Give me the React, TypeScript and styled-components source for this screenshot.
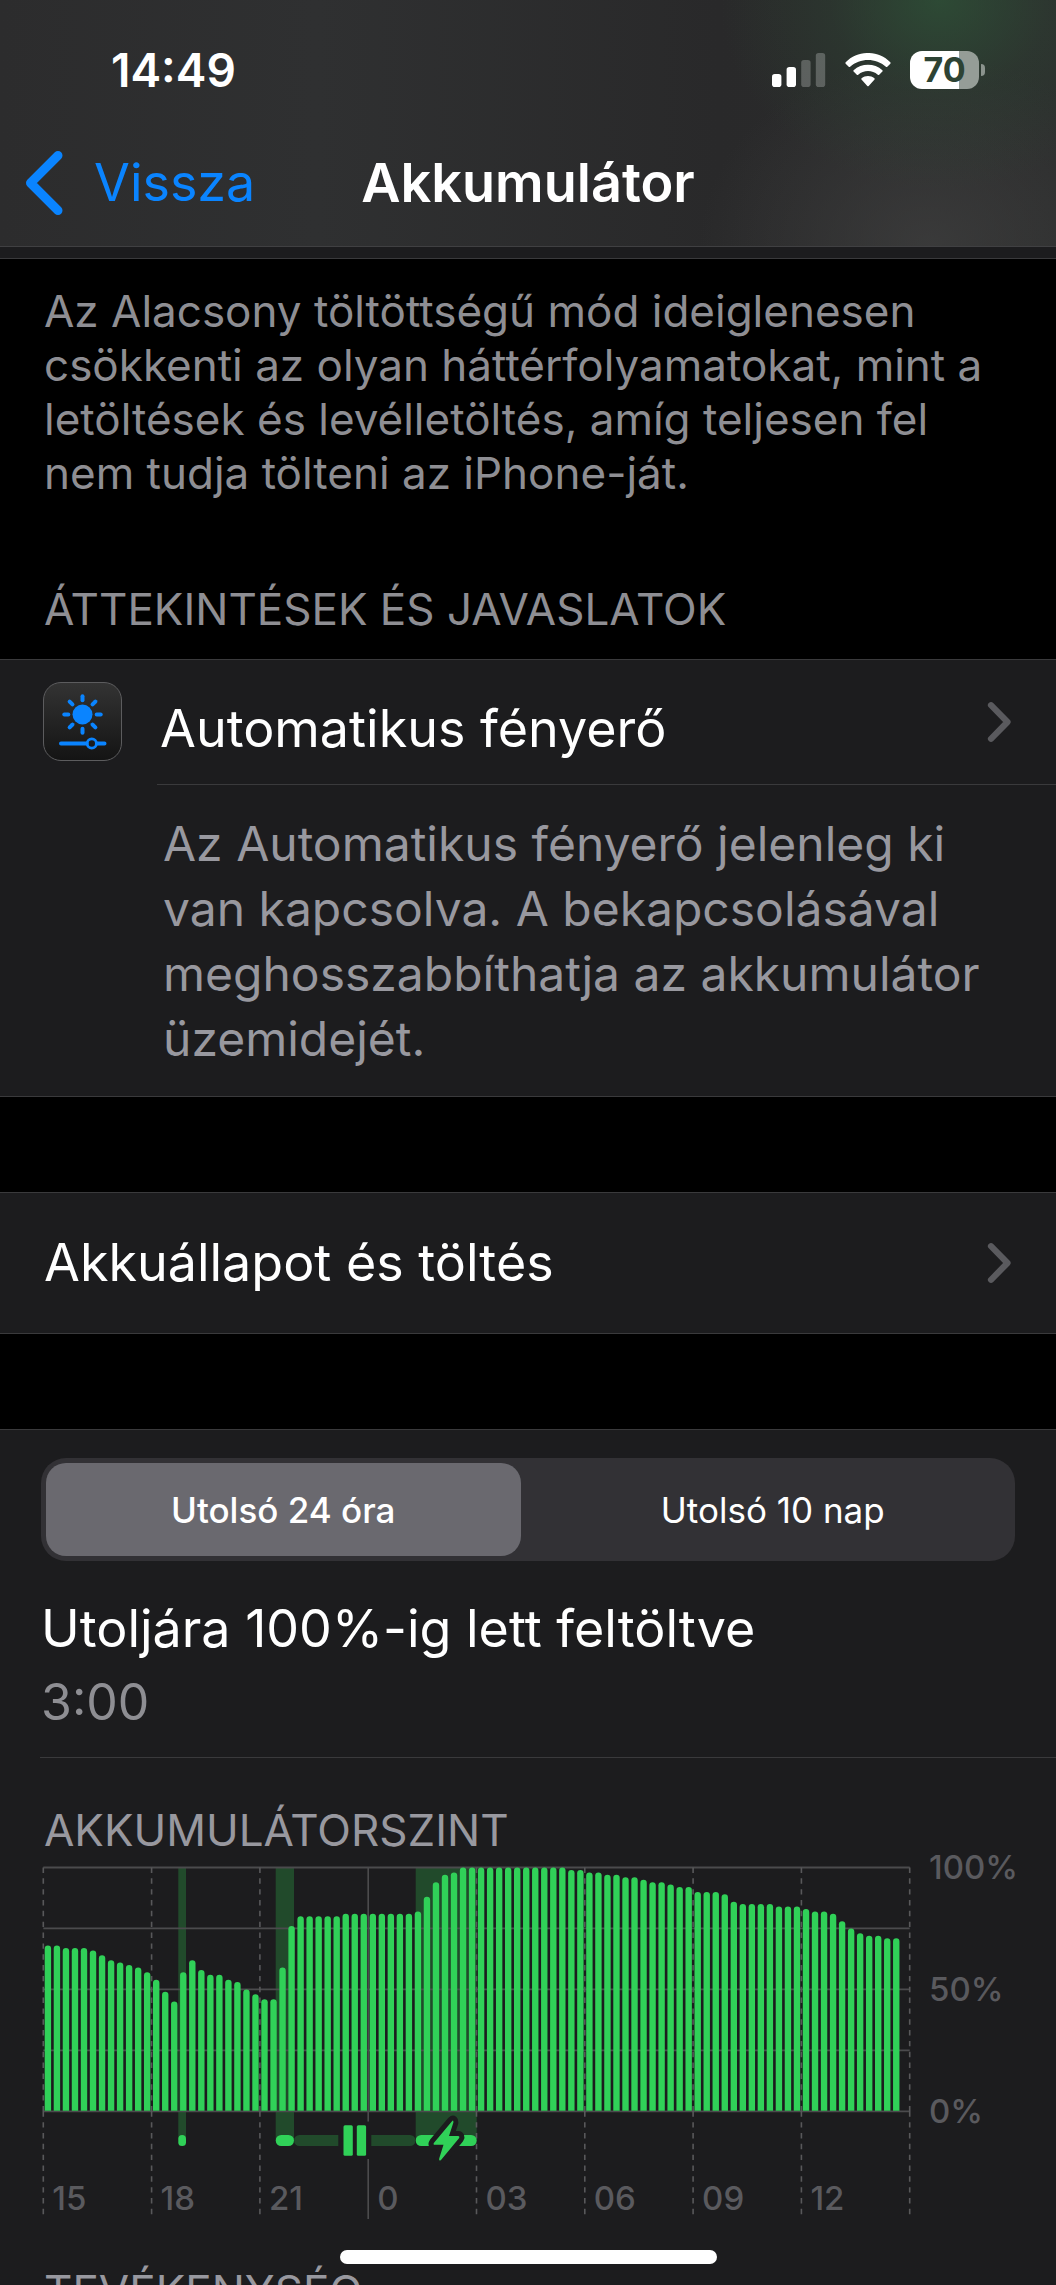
import React, { useState } from "react";
import styled, { createGlobalStyle } from "styled-components";

const color = {
  card: "#1c1c1e",
  line: "#3a3a3c",
  secondary: "#8e8e93",
  description: "#98989f",
  tertiary: "#5a5a5e",
  blue: "#0a84ff",
  green: "#30d158",
  greenDim: "#214a2b",
  grid: "#4b4b4d",
};

const GlobalStyle = createGlobalStyle`
  *, *::before, *::after { box-sizing: border-box; }
  html, body { margin: 0; background: #000; }
  body { font-family: Inter, "Liberation Sans", sans-serif; color: #fff; }
  h1, h2, p { margin: 0; font-weight: 400; }
`;

const Screen = styled.div`
  height: 100vh;
  overflow: hidden;
  background: #000;
`;

const Header = styled.header`
  padding-bottom: 20px;
  border-bottom: 1px solid #404042;
  background:
    radial-gradient(ellipse 220px 190px at 89% 0, rgba(46, 84, 56, 0.75), rgba(46, 76, 54, 0.3) 50%, transparent),
    radial-gradient(ellipse 230px 190px at 88% 100%, rgba(64, 64, 64, 0.7), transparent),
    linear-gradient(90deg, #2c2c2d, #2f3031 30%, #29292a 68%, #2c2d2d);
`;

const StatusBar = styled.div`
  display: flex;
  align-items: center;
  justify-content: space-between;
  height: 140px;
  padding: 0 71px 0 111px;
`;

const Time = styled.time`
  font-size: 46px;
  line-height: 54px;
  font-weight: 600;
`;

const StatusIcons = styled.div`
  display: flex;
  align-items: center;
  gap: 19px;
`;

const Battery = styled.div`
  display: flex;
  align-items: center;
  gap: 2px;
`;

const BatteryBody = styled.div<{ $level: number }>`
  width: 69px;
  height: 38px;
  border-radius: 12px;
  background: linear-gradient(90deg, #fff ${(p) => p.$level}%, #959d97 ${(p) => p.$level}%);
  color: #2d4334;
  font-size: 34px;
  line-height: 38px;
  font-weight: 700;
  text-align: center;
`;

const BatteryNub = styled.div`
  width: 4px;
  height: 12px;
  border-radius: 0 4px 4px 0;
  background: #8b938d;
`;

const NavBar = styled.nav`
  display: grid;
  grid-template-columns: 1fr auto 1fr;
  align-items: center;
  height: 86px;
  padding: 0 24px;
`;

const BackLink = styled.a`
  display: flex;
  align-items: center;
  gap: 29px;
  color: ${color.blue};
  font-size: 52px;
  line-height: 68px;
  text-decoration: none;
`;

const NavTitle = styled.h1`
  font-size: 54px;
  line-height: 68px;
  font-weight: 600;
`;

const GroupTail = styled.div`
  height: 12px;
  border-bottom: 1px solid ${color.line};
  background: ${color.card};
`;

const FootNote = styled.p`
  padding: 25px 44px 0;
  color: ${color.secondary};
  font-size: 44px;
  line-height: 54px;
`;

const SectionTitle = styled.h2<{ $top: number; $inCard?: boolean }>`
  padding: ${(p) => p.$top}px 44px 0;
  color: ${(p) => (p.$inCard ? color.description : color.secondary)};
  font-size: 44px;
  line-height: 54px;
  text-transform: uppercase;
`;

const Group = styled.section<{ $gap: number }>`
  margin-top: ${(p) => p.$gap}px;
  border-top: 1px solid ${color.line};
  border-bottom: 1px solid ${color.line};
  background: ${color.card};
`;

const RowLink = styled.a`
  display: flex;
  align-items: center;
  justify-content: space-between;
  height: 140px;
  padding: 0 42px 0 44px;
  color: #fff;
  font-size: 52px;
  line-height: 68px;
  text-decoration: none;
`;

const Suggestion = styled.div`
  display: grid;
  grid-template-columns: 79px 1fr;
  column-gap: 35px;
  padding-left: 43px;
`;

const AppIcon = styled.div`
  display: flex;
  margin-top: 22px;
  height: 79px;
  border: 1px solid #5c5c5e;
  border-radius: 18px;
  background: linear-gradient(#333, #141414);
`;

const SuggestionLink = styled.a`
  display: flex;
  align-items: flex-end;
  justify-content: space-between;
  height: 125px;
  padding: 20px 42px 21px 3px;
  border-bottom: 1px solid ${color.line};
  color: #fff;
  font-size: 52px;
  line-height: 68px;
  text-decoration: none;
`;

const SuggestionText = styled.p`
  grid-column: 2;
  padding: 26px 44px 25px 6px;
  color: ${color.description};
  font-size: 48px;
  line-height: 65px;
`;

const Chevron = styled.svg`
  flex: none;
  align-self: center;
`;

const Segmented = styled.div`
  display: grid;
  grid-template-columns: 1fr 1fr;
  gap: 15px;
  height: 103px;
  margin: 28px 41px 0;
  padding: 5px;
  border-radius: 25px;
  background: #323135;
`;

const Segment = styled.button<{ $active: boolean }>`
  border: 0;
  border-radius: 20px;
  background: ${(p) => (p.$active ? "#6a696f" : "transparent")};
  color: #fff;
  font-family: inherit;
  font-size: 35px;
  line-height: 42px;
  font-weight: ${(p) => (p.$active ? 500 : 400)};
`;

const LastCharge = styled.div`
  margin-left: 40px;
  padding: 34px 0 25px 1px;
  border-bottom: 1px solid ${color.line};
`;

const ChargeTitle = styled.p`
  font-size: 52px;
  line-height: 68px;
`;

const ChargeTime = styled.p`
  padding-top: 9px;
  color: ${color.secondary};
  font-size: 50px;
  line-height: 60px;
`;

const ChartSvg = styled.svg`
  display: block;
  width: 100%;
  height: auto;
  overflow: visible;
  font-size: 33px;
  font-weight: 500;
`;

const HomeIndicator = styled.div`
  position: fixed;
  bottom: 21px;
  left: 50%;
  width: 377px;
  height: 14px;
  margin-left: -188px;
  border-radius: 7px;
  background: #fff;
`;

const levels = [
  68, 68, 67, 67, 67, 66, 64, 62, 61, 60, 59, 57,
  54, 49, 45, 57, 62, 58, 56, 56, 54, 53, 50, 48,
  46, 46, 59, 76, 80, 80, 80, 80, 80, 81, 81, 81,
  81, 81, 81, 81, 81, 82, 88, 94, 97, 98, 100, 100,
  100, 100, 100, 100, 100, 100, 100, 100, 100, 100, 99, 99,
  98, 98, 97, 97, 96, 96, 95, 94, 94, 93, 92, 92,
  90, 90, 90, 89, 86, 85, 85, 85, 85, 84, 84, 84,
  83, 82, 82, 81, 78, 75, 73, 72, 72, 71, 71,
];

const hours = ["15", "18", "21", "0", "03", "06", "09", "12"];

const charging = [
  { x: 178.3, w: 7.7 },
  { x: 275.7, w: 18.3 },
  { x: 415.7, w: 61 },
];

const LEFT = 43.3;
const RIGHT = 909.7;
const TOP = 10.5;
const PLOT = 243.8;
const BOTTOM = TOP + PLOT;
const SLOT = (RIGHT - LEFT) / 96;
const BOLT = "M452 264.2 L434 285.8 Q432.6 287.8 435 287.8 L443.5 287.8 L439.2 301.5 Q438.6 304.6 441 303 L459 281.2 Q460.2 279.2 458 279 L449 279 L453.4 265.4 Q453.6 262.6 452 264.2 Z";

function barPath(level: number, index: number) {
  const x = LEFT + index * SLOT + 1.4;
  const w = 6.4;
  const y = BOTTOM - (PLOT * level) / 100;
  return `M${x} ${BOTTOM - 0.5}V${y + 3.2}a3.2 3.2 0 0 1 ${w} 0V${BOTTOM - 0.5}z`;
}

function BatteryChart() {
  return (
    <ChartSvg viewBox="0 0 1056 362" role="img" aria-label="Akkumulátorszint">
      {charging.map((c) => (
        <rect key={c.x} x={c.x} y={TOP} width={c.w} height={272} fill={color.greenDim} />
      ))}
      {[0, 1, 2, 3, 4].map((i) => (
        <line key={i} x1={LEFT} x2={RIGHT} y1={TOP + (PLOT * i) / 4} y2={TOP + (PLOT * i) / 4} stroke={color.grid} strokeWidth="1.8" />
      ))}
      {[0, 1, 2, 3, 4, 5, 6, 7, 8].map((i) => {
        const x = LEFT + i * SLOT * 12;
        return i === 3 ? (
          <path key={i} d={`M${x} ${TOP}V264.5M${x} 302V362`} stroke={color.grid} strokeWidth="1.6" />
        ) : (
          <path key={i} d={`M${x} ${TOP}V${BOTTOM}M${x} ${BOTTOM}V357.5`} stroke="#58585a" strokeWidth="1.6" strokeDasharray="5.42 5.42" />
        );
      })}
      {levels.map((level, i) => (
        <path key={i} d={barPath(level, i)} fill={color.green} />
      ))}
      {charging.map((c) => (
        <rect key={c.x} x={c.x} y="278" width={c.w} height="11" rx={Math.min(5.5, c.w / 2)} fill={color.green} />
      ))}
      <path d="M338.3 278H299.5a5.5 5.5 0 0 0 0 11H338.3zM371.3 278H410a5.5 5.5 0 0 1 0 11H371.3z" fill={color.greenDim} />
      <rect x="343.5" y="268.3" width="9.3" height="30.5" rx="1.5" fill={color.green} />
      <rect x="356.8" y="268.3" width="9.3" height="30.5" rx="1.5" fill={color.green} />
      <path d={BOLT} fill={color.card} stroke={color.card} strokeWidth="10" strokeLinejoin="round" />
      <path d={BOLT} fill={color.green} />
      {hours.map((h, i) => (
        <text key={h} x={LEFT + i * SLOT * 12 + 9} y="353" fill={color.tertiary}>{h}</text>
      ))}
      <text x="929" y="22" fill={color.tertiary}>100%</text>
      <text x="929" y="144" fill={color.tertiary}>50%</text>
      <text x="929" y="266" fill={color.tertiary}>0%</text>
    </ChartSvg>
  );
}

function Disclosure() {
  return (
    <Chevron width="28" height="42" viewBox="0 0 28 42" fill="none" aria-hidden="true">
      <path d="M5 4.2L21.5 21L5 37.8" stroke={color.tertiary} strokeWidth="6.2" strokeLinecap="round" strokeLinejoin="round" />
    </Chevron>
  );
}

function BrightnessIcon() {
  return (
    <svg width="77" height="77" viewBox="0 0 77 77" fill="none" stroke={color.blue} strokeLinecap="round" aria-hidden="true">
      <circle cx="38.5" cy="31.5" r="10" fill={color.blue} stroke="none" />
      {[0, 45, 90, 135, 180, 225, 270, 315].map((a) => (
        <path key={a} d="M38.5 13.3V17.3" strokeWidth="4" transform={`rotate(${a} 38.5 31.5)`} />
      ))}
      <path d="M17 60.5H42.5M53 60.5H60.5" strokeWidth="4" />
      <circle cx="47.8" cy="60.5" r="4.6" strokeWidth="2.8" />
    </svg>
  );
}

export default function App() {
  const [range, setRange] = useState(0);
  return (
    <Screen>
      <GlobalStyle />
      <Header>
        <StatusBar>
          <Time>14:49</Time>
          <StatusIcons>
            <svg width="54" height="34" viewBox="0 0 54 34" fill="#fff" aria-hidden="true">
              <rect x="0" y="21" width="9.4" height="13" rx="2.8" />
              <rect x="14.6" y="14" width="9.4" height="20" rx="2.8" />
              <rect x="29.2" y="7" width="9.4" height="27" rx="2.8" opacity="0.24" />
              <rect x="43.8" y="0" width="9.4" height="34" rx="2.8" opacity="0.24" />
            </svg>
            <svg width="46" height="34" viewBox="0 0 46 34" fill="#fff" aria-hidden="true">
              <path d="M.7 9.2C12.8-3.1 33.2-3.1 45.3 9.2Q46 10 45.3 10.7L42.3 13.7Q41.6 14.3 40.9 13.7C31 4.6 15 4.6 5.1 13.7Q4.4 14.3 3.7 13.7L.7 10.7Q0 10 .7 9.2Z" />
              <path d="M8.6 17.2C16.5 9.9 29.5 9.9 37.4 17.2Q38.1 17.9 37.4 18.6L34.2 21.7Q33.5 22.3 32.8 21.7C27.2 16.8 18.8 16.8 13.2 21.7Q12.5 22.3 11.8 21.7L8.6 18.6Q7.9 17.9 8.6 17.2Z" />
              <path d="M16.6 25.2C20.2 22.3 25.8 22.3 29.4 25.2Q30.2 25.9 29.5 26.6L23.7 32.9Q23 33.6 22.3 32.9L16.5 26.6Q15.8 25.9 16.6 25.2Z" />
            </svg>
            <Battery>
              <BatteryBody $level={71}>70</BatteryBody>
              <BatteryNub />
            </Battery>
          </StatusIcons>
        </StatusBar>
        <NavBar>
          <BackLink href="#back">
            <svg width="41" height="66" viewBox="0 0 41 66" fill="none" aria-hidden="true">
              <path d="M34 5.5L6.5 33L34 60.5" stroke={color.blue} strokeWidth="9" strokeLinecap="round" strokeLinejoin="round" />
            </svg>
            Vissza
          </BackLink>
          <NavTitle>Akkumulátor</NavTitle>
        </NavBar>
      </Header>

      <GroupTail />
      <FootNote>
        Az Alacsony töltöttségű mód ideiglenesen csökkenti az olyan háttérfolyamatokat, mint a letöltések és
        levélletöltés, amíg teljesen fel nem tudja tölteni az iPhone-ját.
      </FootNote>

      <SectionTitle $top={82}>Áttekintések és javaslatok</SectionTitle>
      <Group $gap={23}>
        <Suggestion>
          <AppIcon><BrightnessIcon /></AppIcon>
          <SuggestionLink href="#brightness">
            Automatikus fényerő
            <Disclosure />
          </SuggestionLink>
          <SuggestionText>
            Az Automatikus fényerő jelenleg ki van kapcsolva. A bekapcsolásával meghosszabbíthatja az akkumulátor
            üzemidejét.
          </SuggestionText>
        </Suggestion>
      </Group>

      <Group $gap={95}>
        <RowLink href="#health">
          Akkuállapot és töltés
          <Disclosure />
        </RowLink>
      </Group>

      <Group $gap={95}>
        <Segmented role="group" aria-label="Időszak">
          {["Utolsó 24 óra", "Utolsó 10 nap"].map((label, i) => (
            <Segment key={label} type="button" $active={range === i} aria-pressed={range === i} onClick={() => setRange(i)}>
              {label}
            </Segment>
          ))}
        </Segmented>
        <LastCharge>
          <ChargeTitle>Utoljára 100%-ig lett feltöltve</ChargeTitle>
          <ChargeTime>3:00</ChargeTime>
        </LastCharge>
        <SectionTitle $top={45} $inCard>Akkumulátorszint</SectionTitle>
        <BatteryChart />
        <SectionTitle $top={45} $inCard>Tevékenység</SectionTitle>
      </Group>
      <HomeIndicator />
    </Screen>
  );
}
